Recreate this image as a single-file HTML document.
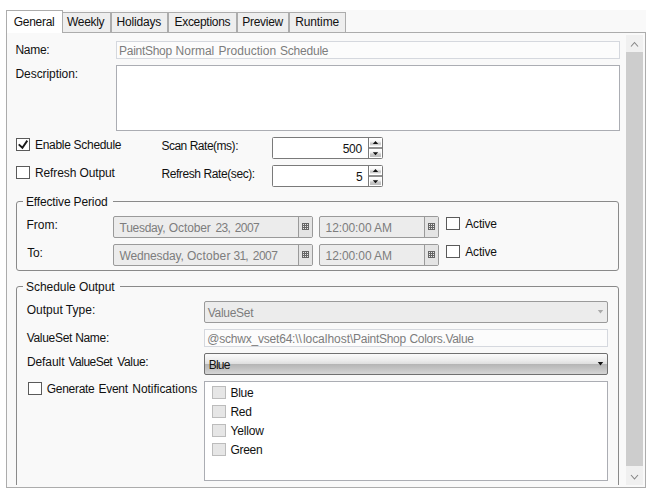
<!DOCTYPE html>
<html><head><meta charset="utf-8">
<style>
*{box-sizing:border-box;margin:0;padding:0}
html,body{width:658px;height:497px;background:#fff;overflow:hidden}
body{font-family:"Liberation Sans",sans-serif;font-size:12px;color:#111;position:relative}
.a{position:absolute;white-space:nowrap}
.t{position:absolute;white-space:nowrap;line-height:14px;height:14px}
.tab{top:12px;height:21px;background:#eee;border:1px solid #acacac;border-left:none;border-right:2px solid #acacac}
.inp{background:#fff;border:1px solid #abadb3}
.dis{background:#fcfcfc;border:1px solid #d5d8de}
.disg{background:#ececec;border:1px solid #9a9a9a}
.gray{color:#7d7d7d}
.cb{width:14px;height:13px;background:#fff;border:1px solid #5a5a5a}
.cbd{width:14px;height:13px;background:#e6e6e6;border:1px solid #bcbcbc}
.grp{border:1px solid #8a8a8a;border-radius:3px}
.glab{background:#f9f9f9;height:14px}
.spu{width:11px;height:7px;background:linear-gradient(#fff 0%,#f2f2f2 40%,#c6c6c6 60%,#d0d0d0 80%,#fafafa 100%)}
.spd{width:11px;height:7px;background:linear-gradient(#fff 0%,#f0f0f0 35%,#c8c8c8 60%,#bdbdbd 100%)}
.num{background:#fff;border:1px solid #7a7a7a;border-radius:1.5px}
</style></head><body>
<!-- tab control background + panel border -->
<div class="a" style="left:6px;top:10px;width:640px;height:478px;background:#f9f9f9"></div>
<div class="a" style="left:6px;top:32px;width:640px;height:456px;border:1px solid #acacac"></div>
<!-- tabs -->
<div class="a tab" style="left:62px;width:50px;border-left:1px solid #acacac"></div>
<div class="a tab" style="left:112px;width:57px"></div>
<div class="a tab" style="left:169px;width:69px"></div>
<div class="a tab" style="left:238px;width:52px"></div>
<div class="a tab" style="left:290px;width:56px;border-right-width:1px"></div>
<div class="a" style="left:6px;top:10px;width:57px;height:23px;background:#fff;border:1px solid #acacac;border-bottom:none"></div>

<!-- scrollbar -->
<div class="a" style="left:626px;top:35px;width:17px;height:450px;background:#f0f0f0"></div>
<div class="a" style="left:626px;top:52px;width:17px;height:414px;background:#cdcdcd"></div>
<svg class="a" style="left:626px;top:35px" width="17" height="17"><path d="M5 11.5 L8.5 7.5 L12 11.5" fill="none" stroke="#868686" stroke-width="1.1"/></svg>
<svg class="a" style="left:626px;top:468px" width="17" height="17"><path d="M5 7 L8.5 11 L12 7" fill="none" stroke="#868686" stroke-width="1.1"/></svg>

<!-- name / description -->
<div class="a dis" style="left:116px;top:41px;width:504px;height:18px"></div>
<div class="a inp" style="left:116px;top:65px;width:504px;height:66px"></div>

<!-- checkboxes & rates -->
<div class="a cb" style="left:16px;top:138px"></div>
<svg class="a" style="left:16px;top:138px" width="14" height="13"><path d="M2.7 6.4 L6.4 9.7 L11.3 2.6" fill="none" stroke="#1a1a1a" stroke-width="1.9"/></svg>
<div class="a cb" style="left:16px;top:166px"></div>
<div class="a num" style="left:272px;top:137px;width:111px;height:22px"></div>
<div class="a num" style="left:272px;top:165px;width:111px;height:22px"></div>
<div class="a" style="left:368px;top:138px;width:1px;height:20px;background:#7a7a7a"></div>
<div class="a" style="left:368px;top:166px;width:1px;height:20px;background:#7a7a7a"></div>
<div class="a" style="left:369px;top:147px;width:13px;height:2px;background:#909090"></div>
<div class="a" style="left:369px;top:175px;width:13px;height:2px;background:#909090"></div>
<div class="a spu" style="left:370px;top:139px"></div><div class="a spd" style="left:370px;top:150px"></div>
<div class="a spu" style="left:370px;top:167px"></div><div class="a spd" style="left:370px;top:178px"></div>
<svg class="a" style="left:370px;top:139px" width="12" height="48"><path d="M2.8 5 L5.5 2 L8.2 5Z M2.8 13.2 L5.5 16.2 L8.2 13.2Z M2.8 33 L5.5 30 L8.2 33Z M2.8 41.2 L5.5 44.2 L8.2 41.2Z" fill="#111"/></svg>

<!-- effective period -->
<div class="a grp" style="left:16px;top:201px;width:603px;height:70px"></div>
<div class="a glab" style="left:23px;top:195px;width:90px"></div>
<div class="a disg" style="left:113px;top:216px;width:200px;height:22px;border-radius:2px"></div>
<div class="a disg" style="left:113px;top:244px;width:200px;height:22px;border-radius:2px"></div>
<div class="a" style="left:298px;top:217px;width:14px;height:20px;background:#e4e4e4;border-left:1px solid #9a9a9a"></div><svg class="a" style="left:302px;top:223px" width="7" height="7"><rect width="7" height="7" fill="#666"/><path d="M1 1h1v1h-1z M3 1h1v1h-1z M5 1h1v1h-1z M1 3h1v1h-1z M3 3h1v1h-1z M5 3h1v1h-1z M1 5h1v1h-1z M3 5h1v1h-1z M5 5h1v1h-1z" fill="#e8e8e8"/></svg>
<div class="a" style="left:298px;top:245px;width:14px;height:20px;background:#e4e4e4;border-left:1px solid #9a9a9a"></div><svg class="a" style="left:302px;top:251px" width="7" height="7"><rect width="7" height="7" fill="#666"/><path d="M1 1h1v1h-1z M3 1h1v1h-1z M5 1h1v1h-1z M1 3h1v1h-1z M3 3h1v1h-1z M5 3h1v1h-1z M1 5h1v1h-1z M3 5h1v1h-1z M5 5h1v1h-1z" fill="#e8e8e8"/></svg>
<div class="a disg" style="left:319px;top:216px;width:120px;height:22px;border-radius:2px"></div>
<div class="a disg" style="left:319px;top:244px;width:120px;height:22px;border-radius:2px"></div>
<div class="a" style="left:424px;top:217px;width:14px;height:20px;background:#e4e4e4;border-left:1px solid #9a9a9a"></div><svg class="a" style="left:428px;top:223px" width="7" height="7"><rect width="7" height="7" fill="#666"/><path d="M1 1h1v1h-1z M3 1h1v1h-1z M5 1h1v1h-1z M1 3h1v1h-1z M3 3h1v1h-1z M5 3h1v1h-1z M1 5h1v1h-1z M3 5h1v1h-1z M5 5h1v1h-1z" fill="#e8e8e8"/></svg>
<div class="a" style="left:424px;top:245px;width:14px;height:20px;background:#e4e4e4;border-left:1px solid #9a9a9a"></div><svg class="a" style="left:428px;top:251px" width="7" height="7"><rect width="7" height="7" fill="#666"/><path d="M1 1h1v1h-1z M3 1h1v1h-1z M5 1h1v1h-1z M1 3h1v1h-1z M3 3h1v1h-1z M5 3h1v1h-1z M1 5h1v1h-1z M3 5h1v1h-1z M5 5h1v1h-1z" fill="#e8e8e8"/></svg>
<div class="a cb" style="left:446px;top:217px"></div>
<div class="a cb" style="left:446px;top:245px"></div>

<!-- schedule output -->
<div class="a grp" style="left:16px;top:286px;width:603px;height:210px"></div>
<div class="a glab" style="left:23px;top:280px;width:97px"></div>
<div class="a disg" style="left:204px;top:301px;width:404px;height:22px;border-radius:2px"></div>
<div class="a dis" style="left:204px;top:329px;width:404px;height:18px"></div>
<div class="a" style="left:204px;top:353px;width:404px;height:22px;border:1px solid #707070;border-radius:2px;background:linear-gradient(#fbfbfb 0%,#ededed 30%,#dedede 50%,#b4b4b4 50%,#c4c4c4 75%,#d6d6d6 100%)"></div>
<div class="a cb" style="left:28px;top:382px"></div>
<div class="a inp" style="left:204px;top:381px;width:404px;height:100px"></div>
<div class="a cbd" style="left:212px;top:386px"></div>
<div class="a cbd" style="left:212px;top:405px"></div>
<div class="a cbd" style="left:212px;top:424px"></div>
<div class="a cbd" style="left:212px;top:443px"></div>
<svg class="a" style="left:596px;top:308px" width="8" height="8"><path d="M1.8 2 L7.2 2 L4.5 5.4Z" fill="#aaa"/></svg>
<svg class="a" style="left:596px;top:360px" width="8" height="8"><path d="M1.8 2 L7.2 2 L4.5 5.4Z" fill="#111"/></svg>
<!-- cover bottom -->
<div class="a" style="left:0;top:488px;width:658px;height:9px;background:#fff"></div>
<div class="a" style="left:6px;top:487px;width:640px;height:1px;background:#acacac"></div>
<div class="a" style="left:7px;top:485px;width:638px;height:2px;background:#f9f9f9"></div>
<span class="t" id="t1" style="left:13.80px;top:15px;letter-spacing:-0.300px">General</span>
<span class="t" id="t2" style="left:67.00px;top:15px;letter-spacing:-0.300px">Weekly</span>
<span class="t" id="t3" style="left:116.60px;top:15px;letter-spacing:-0.190px">Holidays</span>
<span class="t" id="t4" style="left:174.50px;top:15px;letter-spacing:-0.300px">Exceptions</span>
<span class="t" id="t5" style="left:242.30px;top:15px;letter-spacing:-0.300px">Preview</span>
<span class="t" id="t6" style="left:295.20px;top:15px;letter-spacing:-0.113px">Runtime</span>
<span class="t" id="l1" style="left:15.50px;top:43px;letter-spacing:-0.300px">Name:</span>
<span class="t" id="l2" style="left:15.50px;top:67px;letter-spacing:-0.071px">Description:</span>
<span class="t" id="l3" style="left:35.00px;top:138px;letter-spacing:-0.300px">Enable Schedule</span>
<span class="t" id="l4" style="left:35.00px;top:166px;letter-spacing:-0.117px">Refresh Output</span>
<span class="t" id="l5" style="left:161.40px;top:139px;letter-spacing:-0.483px">Scan Rate(ms):</span>
<span class="t" id="l6" style="left:161.40px;top:167px;letter-spacing:-0.407px">Refresh Rate(sec):</span>
<span class="t" id="n1" style="left:342.70px;top:142px;letter-spacing:-0.300px">500</span>
<span class="t" id="n2" style="left:356.10px;top:170px;letter-spacing:-0.300px">5</span>
<span class="t" id="g1" style="left:25.90px;top:195px;letter-spacing:-0.141px">Effective Period</span>
<span class="t" id="l7" style="left:26.50px;top:218px;letter-spacing:-0.020px">From:</span>
<span class="t" id="l8" style="left:27.34px;top:246px;letter-spacing:-0.300px">To:</span>
<span class="t gray" id="d3" style="left:325.60px;top:221px;letter-spacing:-0.104px">12:00:00 AM</span>
<span class="t gray" id="d4" style="left:325.60px;top:249px;letter-spacing:-0.104px">12:00:00 AM</span>
<span class="t" id="l9" style="left:465.34px;top:217px;letter-spacing:-0.216px">Active</span>
<span class="t" id="l10" style="left:465.34px;top:245px;letter-spacing:-0.216px">Active</span>
<span class="t" id="g2" style="left:26.10px;top:280px;letter-spacing:-0.060px">Schedule Output</span>
<span class="t" id="l11" style="left:26.70px;top:303px;letter-spacing:0.005px">Output Type:</span>
<span class="t" id="l12" style="left:26.70px;top:331px;letter-spacing:-0.300px">ValueSet Name:</span>
<span class="t gray" id="v2" style="left:207.80px;top:306px;letter-spacing:-0.300px">ValueSet</span>
<span class="t" id="v4" style="left:208.85px;top:358px;letter-spacing:-0.837px">Blue</span>
<span class="t" id="i1" style="left:230.50px;top:386px;letter-spacing:-0.300px">Blue</span>
<span class="t" id="i2" style="left:230.50px;top:405px;letter-spacing:-0.300px">Red</span>
<span class="t" id="i3" style="left:230.50px;top:424px;letter-spacing:-0.174px">Yellow</span>
<span class="t" id="i4" style="left:230.50px;top:443px;letter-spacing:-0.300px">Green</span>
<span class="t gray" id="v1a" style="left:119.10px;top:44px;letter-spacing:-0.300px">PaintShop</span>
<span class="t gray" id="v1b" style="left:175.50px;top:44px;letter-spacing:0.022px">Normal</span>
<span class="t gray" id="v1c" style="left:218.60px;top:44px;letter-spacing:0.011px">Production</span>
<span class="t gray" id="v1d" style="left:280.00px;top:44px;letter-spacing:-0.220px">Schedule</span>
<span class="t gray" id="v3a" style="left:207.20px;top:332px;letter-spacing:-0.202px">@schwx_vset64:\\</span>
<span class="t gray" id="v3b" style="left:302.90px;top:332px;letter-spacing:-0.036px">localhost\</span>
<span class="t gray" id="v3c" style="left:353.10px;top:332px;letter-spacing:-0.300px">PaintShop</span>
<span class="t gray" id="v3d" style="left:409.50px;top:332px;letter-spacing:-0.300px">Colors.Value</span>
<span class="t gray" id="d1a" style="left:119.60px;top:221px;letter-spacing:-0.300px">Tuesday,</span>
<span class="t gray" id="d1b" style="left:168.80px;top:221px;letter-spacing:-0.113px">October</span>
<span class="t gray" id="d1c" style="left:215.60px;top:221px;letter-spacing:-0.685px">23,</span>
<span class="t gray" id="d1d" style="left:234.70px;top:221px;letter-spacing:-0.533px">2007</span>
<span class="t gray" id="d2a" style="left:119.60px;top:249px;letter-spacing:-0.160px">Wednesday,</span>
<span class="t gray" id="d2b" style="left:186.90px;top:249px;letter-spacing:0.143px">October</span>
<span class="t gray" id="d2c" style="left:233.60px;top:249px;letter-spacing:-0.825px">31,</span>
<span class="t gray" id="d2d" style="left:252.80px;top:249px;letter-spacing:-0.533px">2007</span>
<span class="t" id="l13a" style="left:26.90px;top:355px;letter-spacing:-0.067px">Default</span>
<span class="t" id="l13b" style="left:68.49px;top:355px;letter-spacing:-0.520px">ValueSet</span>
<span class="t" id="l13c" style="left:117.17px;top:355px;letter-spacing:-0.328px">Value:</span>
<span class="t" id="l14a" style="left:46.80px;top:382px;letter-spacing:-0.300px">Generate</span>
<span class="t" id="l14b" style="left:98.60px;top:382px;letter-spacing:-0.300px">Event</span>
<span class="t" id="l14c" style="left:132.30px;top:382px;letter-spacing:-0.043px">Notifications</span>
</body></html>
